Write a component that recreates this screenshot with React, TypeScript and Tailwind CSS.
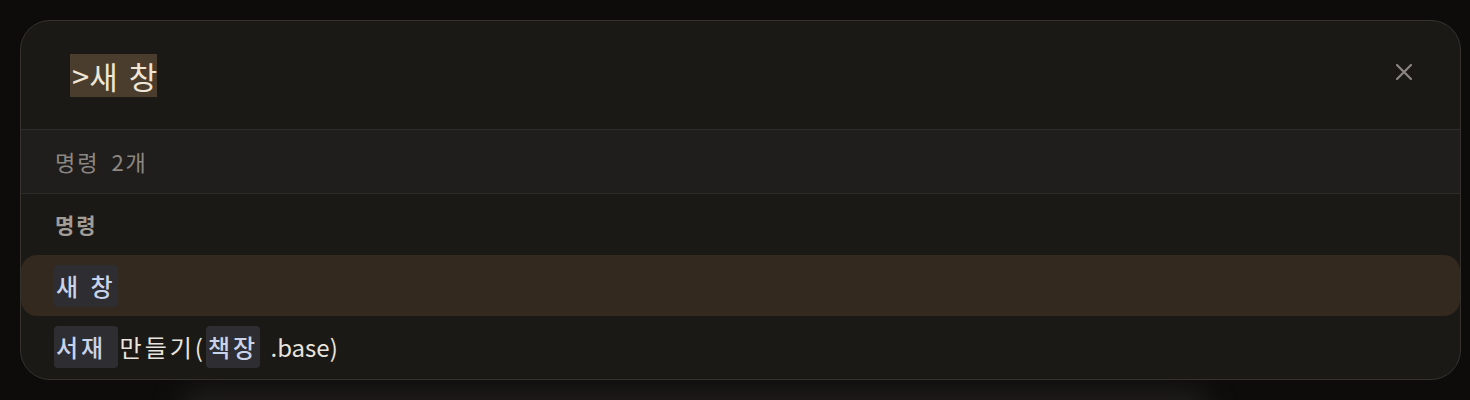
import React from "react";

const font = { fontFamily: '"Noto Sans CJK KR", "Noto Sans", sans-serif' };

function Match({ children }: { children: React.ReactNode }) {
  return (
    <span className="bg-[#2e2d32] text-[#c9d3ea] font-medium rounded-[4px] px-[2px] py-[3px]">
      {children}
    </span>
  );
}

export default function App() {
  return (
    <div
      className="w-[1470px] h-[400px] bg-[#0d0c0b] pt-[20px] pl-[20px] relative overflow-hidden"
      style={font}
    >
      <div className="absolute left-[180px] right-[260px] bottom-[-30px] h-[40px] rounded-full bg-[#2a2725] blur-[14px] opacity-70" />
      <div className="relative w-[1441px] h-[360px] rounded-[30px] border border-[#36332f] bg-[#1b1915] overflow-hidden flex flex-col">
        <div className="h-[109px] shrink-0 flex items-center justify-between pl-[49px] pr-[46px] border-b border-[#2e2c29]">
          <span className="bg-[#4b3d2d] text-[#efe6d6] text-[31px] leading-[43px] pl-[2px] [word-spacing:4px]">
            &gt;새 창
          </span>
          <svg width="20" height="20" viewBox="0 0 20 20" className="-mt-[6px]">
            <path d="M3 3 L17 17 M17 3 L3 17" stroke="#8b8681" strokeWidth="2.2" strokeLinecap="round" />
          </svg>
        </div>
        <div className="h-[64px] shrink-0 flex items-center pl-[34px] bg-[#201e1c] border-b border-[#2e2c29] text-[22px] tracking-[2px] [word-spacing:5px] text-[#8c8782]">
          명령 2개
        </div>
        <div className="h-[61px] shrink-0 flex items-center pl-[34px] text-[21px] tracking-[2px] font-bold text-[#a29d97]">
          명령
        </div>
        <div className="h-[61px] shrink-0 flex items-center pl-[33px] rounded-[16px] bg-[#33291f] text-[24px] tracking-[3px] [word-spacing:1px] text-[#e9e5de]">
          <Match>새 창</Match>
        </div>
        <div className="h-[61px] shrink-0 flex items-center pl-[33px] text-[24px] tracking-[3px] [word-spacing:1px] text-[#e9e5de] whitespace-pre">
          <Match>서재 </Match>
          <span className="ml-[2px]">만들기(</span>
          <Match>책장</Match>
          <span className="tracking-[0px] [word-spacing:5px]"> .base)</span>
        </div>
      </div>
    </div>
  );
}
